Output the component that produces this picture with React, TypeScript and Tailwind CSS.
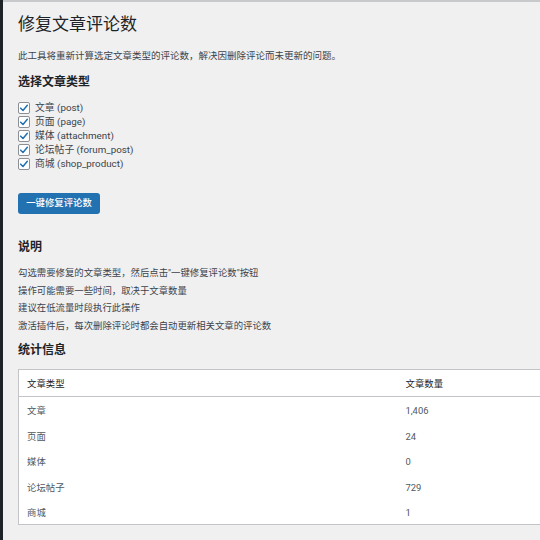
import React from "react";

const postTypes = [
  { label: "文章", slug: "post" },
  { label: "页面", slug: "page" },
  { label: "媒体", slug: "attachment" },
  { label: "论坛帖子", slug: "forum_post" },
  { label: "商城", slug: "shop_product" },
];

const stats = [
  { type: "文章", count: "1,406" },
  { type: "页面", count: "24" },
  { type: "媒体", count: "0" },
  { type: "论坛帖子", count: "729" },
  { type: "商城", count: "1" },
];

const notes = [
  "勾选需要修复的文章类型，然后点击\"一键修复评论数\"按钮",
  "操作可能需要一些时间，取决于文章数量",
  "建议在低流量时段执行此操作",
  "激活插件后，每次删除评论时都会自动更新相关文章的评论数",
];

function CheckBox() {
  return (
    <span className="flex h-[12px] w-[12px] shrink-0 items-center justify-center rounded-[2px] border border-[#8c8f94] bg-white">
      <svg viewBox="0 0 12 12" className="h-[10px] w-[10px]" fill="none">
        <path d="M2 6.2 L4.8 9 L10 2.8" stroke="#2271b1" strokeWidth="1.8" strokeLinecap="round" strokeLinejoin="round" />
      </svg>
    </span>
  );
}

export default function App() {
  return (
    <div
      className="flex h-[540px] w-[540px] overflow-hidden bg-[#f0f0f1] text-[#3c434a]"
      style={{ fontFamily: 'Roboto, "Noto Sans CJK SC", sans-serif' }}
    >
      {/* admin sidebar edge */}
      <div className="w-[3px] shrink-0 bg-[#1d2327]" />

      <div className="flex min-w-0 flex-1 flex-col">
        <div className="h-[2px] shrink-0 bg-[#c8c9cb]" />

        <div className="pl-[15px]">
          <h1 className="mt-[10px] text-[17px] leading-[24px] text-[#1d2327]">修复文章评论数</h1>
          <p className="mt-[13px] text-[9.5px] leading-[14px]">
            此工具将重新计算选定文章类型的评论数，解决因删除评论而未更新的问题。
          </p>

          <h2 className="mt-[11px] text-[12px] font-bold leading-[16px] text-[#1d2327]">选择文章类型</h2>
          <ul className="mt-[11px]">
            {postTypes.map((t) => (
              <li key={t.slug} className="flex h-[14px] items-center gap-[5px] text-[9.8px] text-[#3c434a]">
                <CheckBox />
                <span>
                  {t.label} ({t.slug})
                </span>
              </li>
            ))}
          </ul>

          <button className="mt-[22px] flex h-[21px] w-[82px] items-center justify-center rounded-[3px] bg-[#2271b1] text-[9.4px] font-medium text-white">
            一键修复评论数
          </button>

          <h2 className="mt-[25px] text-[12px] font-bold leading-[16px] text-[#1d2327]">说明</h2>
          <div className="mt-[9px] text-[9.4px] leading-[17.6px]">
            {notes.map((n) => (
              <p key={n}>{n}</p>
            ))}
          </div>

          <h2 className="mt-[8px] text-[12px] font-bold leading-[16px] text-[#1d2327]">统计信息</h2>

          <table className="mt-[11px] w-[560px] border border-[#c3c4c7] bg-white text-[9.4px]">
            <thead>
              <tr className="border-b border-[#c3c4c7]">
                <th className="h-[27px] w-[379px] px-[8px] pt-[1px] text-left font-normal text-[#1d2327]">文章类型</th>
                <th className="h-[27px] px-[8px] pt-[1px] text-left font-normal text-[#1d2327]">文章数量</th>
              </tr>
            </thead>
            <tbody className="text-[#50575e]">
              {stats.map((s) => (
                <tr key={s.type}>
                  <td className="h-[25.6px] px-[8px] pt-[3px]">{s.type}</td>
                  <td className="h-[25.6px] px-[8px] pt-[3px]">{s.count}</td>
                </tr>
              ))}
            </tbody>
          </table>
        </div>
      </div>
    </div>
  );
}
